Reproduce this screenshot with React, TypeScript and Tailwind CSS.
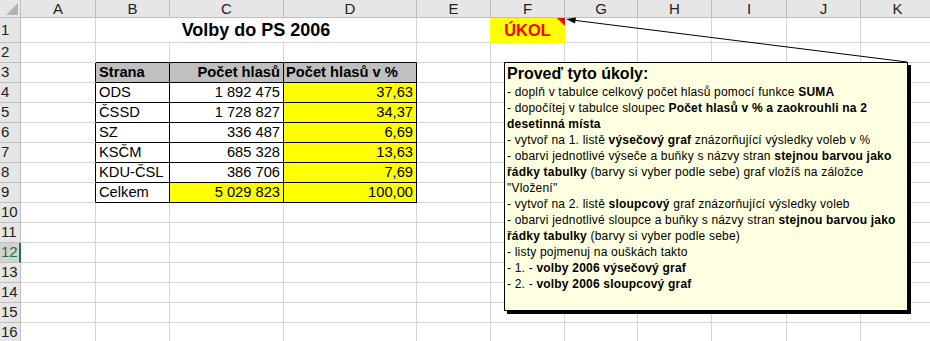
import React from "react";

const COLS = ["A", "B", "C", "D", "E", "F", "G", "H", "I", "J", "K"];
const ROWS = Array.from({ length: 16 }, (_, i) => i + 1);

const data: Record<string, [string, string, string]> = {
  4: ["ODS", "1 892 475", "37,63"],
  5: ["ČSSD", "1 728 827", "34,37"],
  6: ["SZ", "336 487", "6,69"],
  7: ["KSČM", "685 328", "13,63"],
  8: ["KDU-ČSL", "386 706", "7,69"],
  9: ["Celkem", "5 029 823", "100,00"],
};

const grid = "border-r border-b border-[#d4d4d4]";
const box = "border-r border-b border-black";

const cellFor = (r: number, c: string) => {
  // merged title B1:D1
  if (r === 1 && (c === "C" || c === "D")) return null;
  if (r === 1 && c === "B")
    return (
      <div key={c} className={`col-span-3 flex items-center justify-center pt-[1px] text-[18px] font-bold ${grid}`}>
        Volby do PS 2006
      </div>
    );
  if (r === 1 && c === "F")
    return (
      <div key={c} className="flex items-center justify-center border-r border-b border-[#ffff00] bg-[#ffff00] pt-[1px] text-[16.5px] font-bold text-[#ff0000]">
        ÚKOL
      </div>
    );
  if (r === 1 && c === "E") return <div key={c} className="border-r border-b border-[#d4d4d4] border-r-[#ffff00]" />;

  if (r === 2 && (c === "B" || c === "C" || c === "D"))
    return <div key={c} className="border-r border-b border-[#d4d4d4] border-b-black" />;
  if (r >= 3 && r <= 9 && c === "A")
    return <div key={c} className="border-r border-b border-[#d4d4d4] border-r-black" />;

  if (r === 3) {
    if (c === "B")
      return (
        <div key={c} className={`flex items-center bg-[#c0c0c0] pl-[3px] font-bold ${box}`}>
          Strana
        </div>
      );
    if (c === "C")
      return (
        <div key={c} className={`flex items-center justify-end bg-[#c0c0c0] pr-[3px] font-bold ${box}`}>
          Počet hlasů
        </div>
      );
    if (c === "D")
      return (
        <div key={c} className={`flex items-center bg-[#c0c0c0] pl-[2px] font-bold ${box}`}>
          Počet hlasů v %
        </div>
      );
  }

  if (r >= 4 && r <= 9) {
    const row = data[r];
    if (c === "B")
      return (
        <div key={c} className={`flex items-center pl-[3px] ${box}`}>
          {row[0]}
        </div>
      );
    if (c === "C")
      return (
        <div key={c} className={`flex items-center justify-end pr-[3px] ${box} ${r === 9 ? "bg-[#ffff00]" : ""}`}>
          {row[1]}
        </div>
      );
    if (c === "D")
      return (
        <div key={c} className={`flex items-center justify-end bg-[#ffff00] pr-[3px] ${box}`}>
          {row[2]}
        </div>
      );
  }

  return <div key={c} className={grid} />;
};

const Note = () => (
  <div className="absolute left-[504px] top-[62px] h-[249px] w-[404px] border border-black bg-[#ffffe1] pl-[2px] pt-[1px] font-['Liberation_Sans',sans-serif] text-[12px] leading-[16px] tracking-[0.2px] text-black shadow-[3px_3px_0_#000] whitespace-nowrap">
    <div className="text-[16px] font-bold leading-[20px] tracking-normal">Proveď tyto úkoly:</div>
    <div>- doplň v tabulce celkový počet hlasů pomocí funkce <b>SUMA</b></div>
    <div>
      - dopočítej v tabulce sloupec <b>Počet hlasů v % a zaokrouhli na 2</b>
    </div>
    <div>
      <b>desetinná místa</b>
    </div>
    <div>
      - vytvoř na 1. listě <b>výsečový graf</b> znázorňující výsledky voleb v %
    </div>
    <div>
      - obarvi jednotlivé výseče a buňky s názvy stran <b>stejnou barvou jako</b>
    </div>
    <div>
      <b>řádky tabulky</b> (barvy si vyber podle sebe) graf vložíš na záložce
    </div>
    <div>"Vložení"</div>
    <div>
      - vytvoř na 2. listě <b>sloupcový</b> graf znázorňující výsledky voleb
    </div>
    <div>
      - obarvi jednotlivé sloupce a buňky s názvy stran <b>stejnou barvou jako</b>
    </div>
    <div>
      <b>řádky tabulky</b> (barvy si vyber podle sebe)
    </div>
    <div>- listy pojmenuj na ouškách takto</div>
    <div>
      - 1. - <b>volby 2006 výsečový graf</b>
    </div>
    <div>
      - 2. - <b>volby 2006 sloupcový graf</b>
    </div>
  </div>
);

export default function App() {
  return (
    <div className="relative h-[341px] w-[930px] overflow-hidden bg-white font-['Liberation_Sans',Arial,sans-serif] text-[14.7px] text-black">
      <div className="grid grid-cols-[21px_75px_74px_114px_133px_74px_74px_73px_74px_75px_74px_74px] grid-rows-[18px_25px_repeat(15,20px)]">
        {/* corner */}
        <div className="relative border-r border-b border-[#bfbfbf] bg-[#e6e6e6]">
          <svg className="absolute left-0 top-0" width="20" height="17" viewBox="0 0 20 17">
            <polygon points="18,3 18,15 6,15" fill="#b4b4b4" />
          </svg>
        </div>
        {COLS.map((c) => (
          <div
            key={c}
            className="flex items-center justify-center border-r border-b border-[#bfbfbf] bg-[#e6e6e6] text-[15px] leading-none text-[#222]"
          >
            {c}
          </div>
        ))}

        {ROWS.map((r) => (
          <React.Fragment key={r}>
            {r === 12 ? (
              <div className="flex items-center border-r-2 border-b border-[#bfbfbf] border-r-[#217346] bg-[#d2d2d2] pl-[1px] text-[15px] text-[#217346]">
                {r}
              </div>
            ) : (
              <div className="flex items-center border-r border-b border-[#bfbfbf] bg-[#e6e6e6] pl-[1px] text-[15px] text-[#222]">
                {r}
              </div>
            )}
            {COLS.map((c) => cellFor(r, c))}
          </React.Fragment>
        ))}
      </div>

      {/* comment indicator + arrow */}
      <svg className="pointer-events-none absolute left-0 top-0" width="930" height="341">
        <polygon points="557,18 565,18 565,26" fill="#ff0000" />
        <line x1="907" y1="62" x2="572" y2="20" stroke="#000" strokeWidth="1" />
        <polygon points="566,19 576,17.5 575,23.5" fill="#000" />
      </svg>

      <Note />
    </div>
  );
}
